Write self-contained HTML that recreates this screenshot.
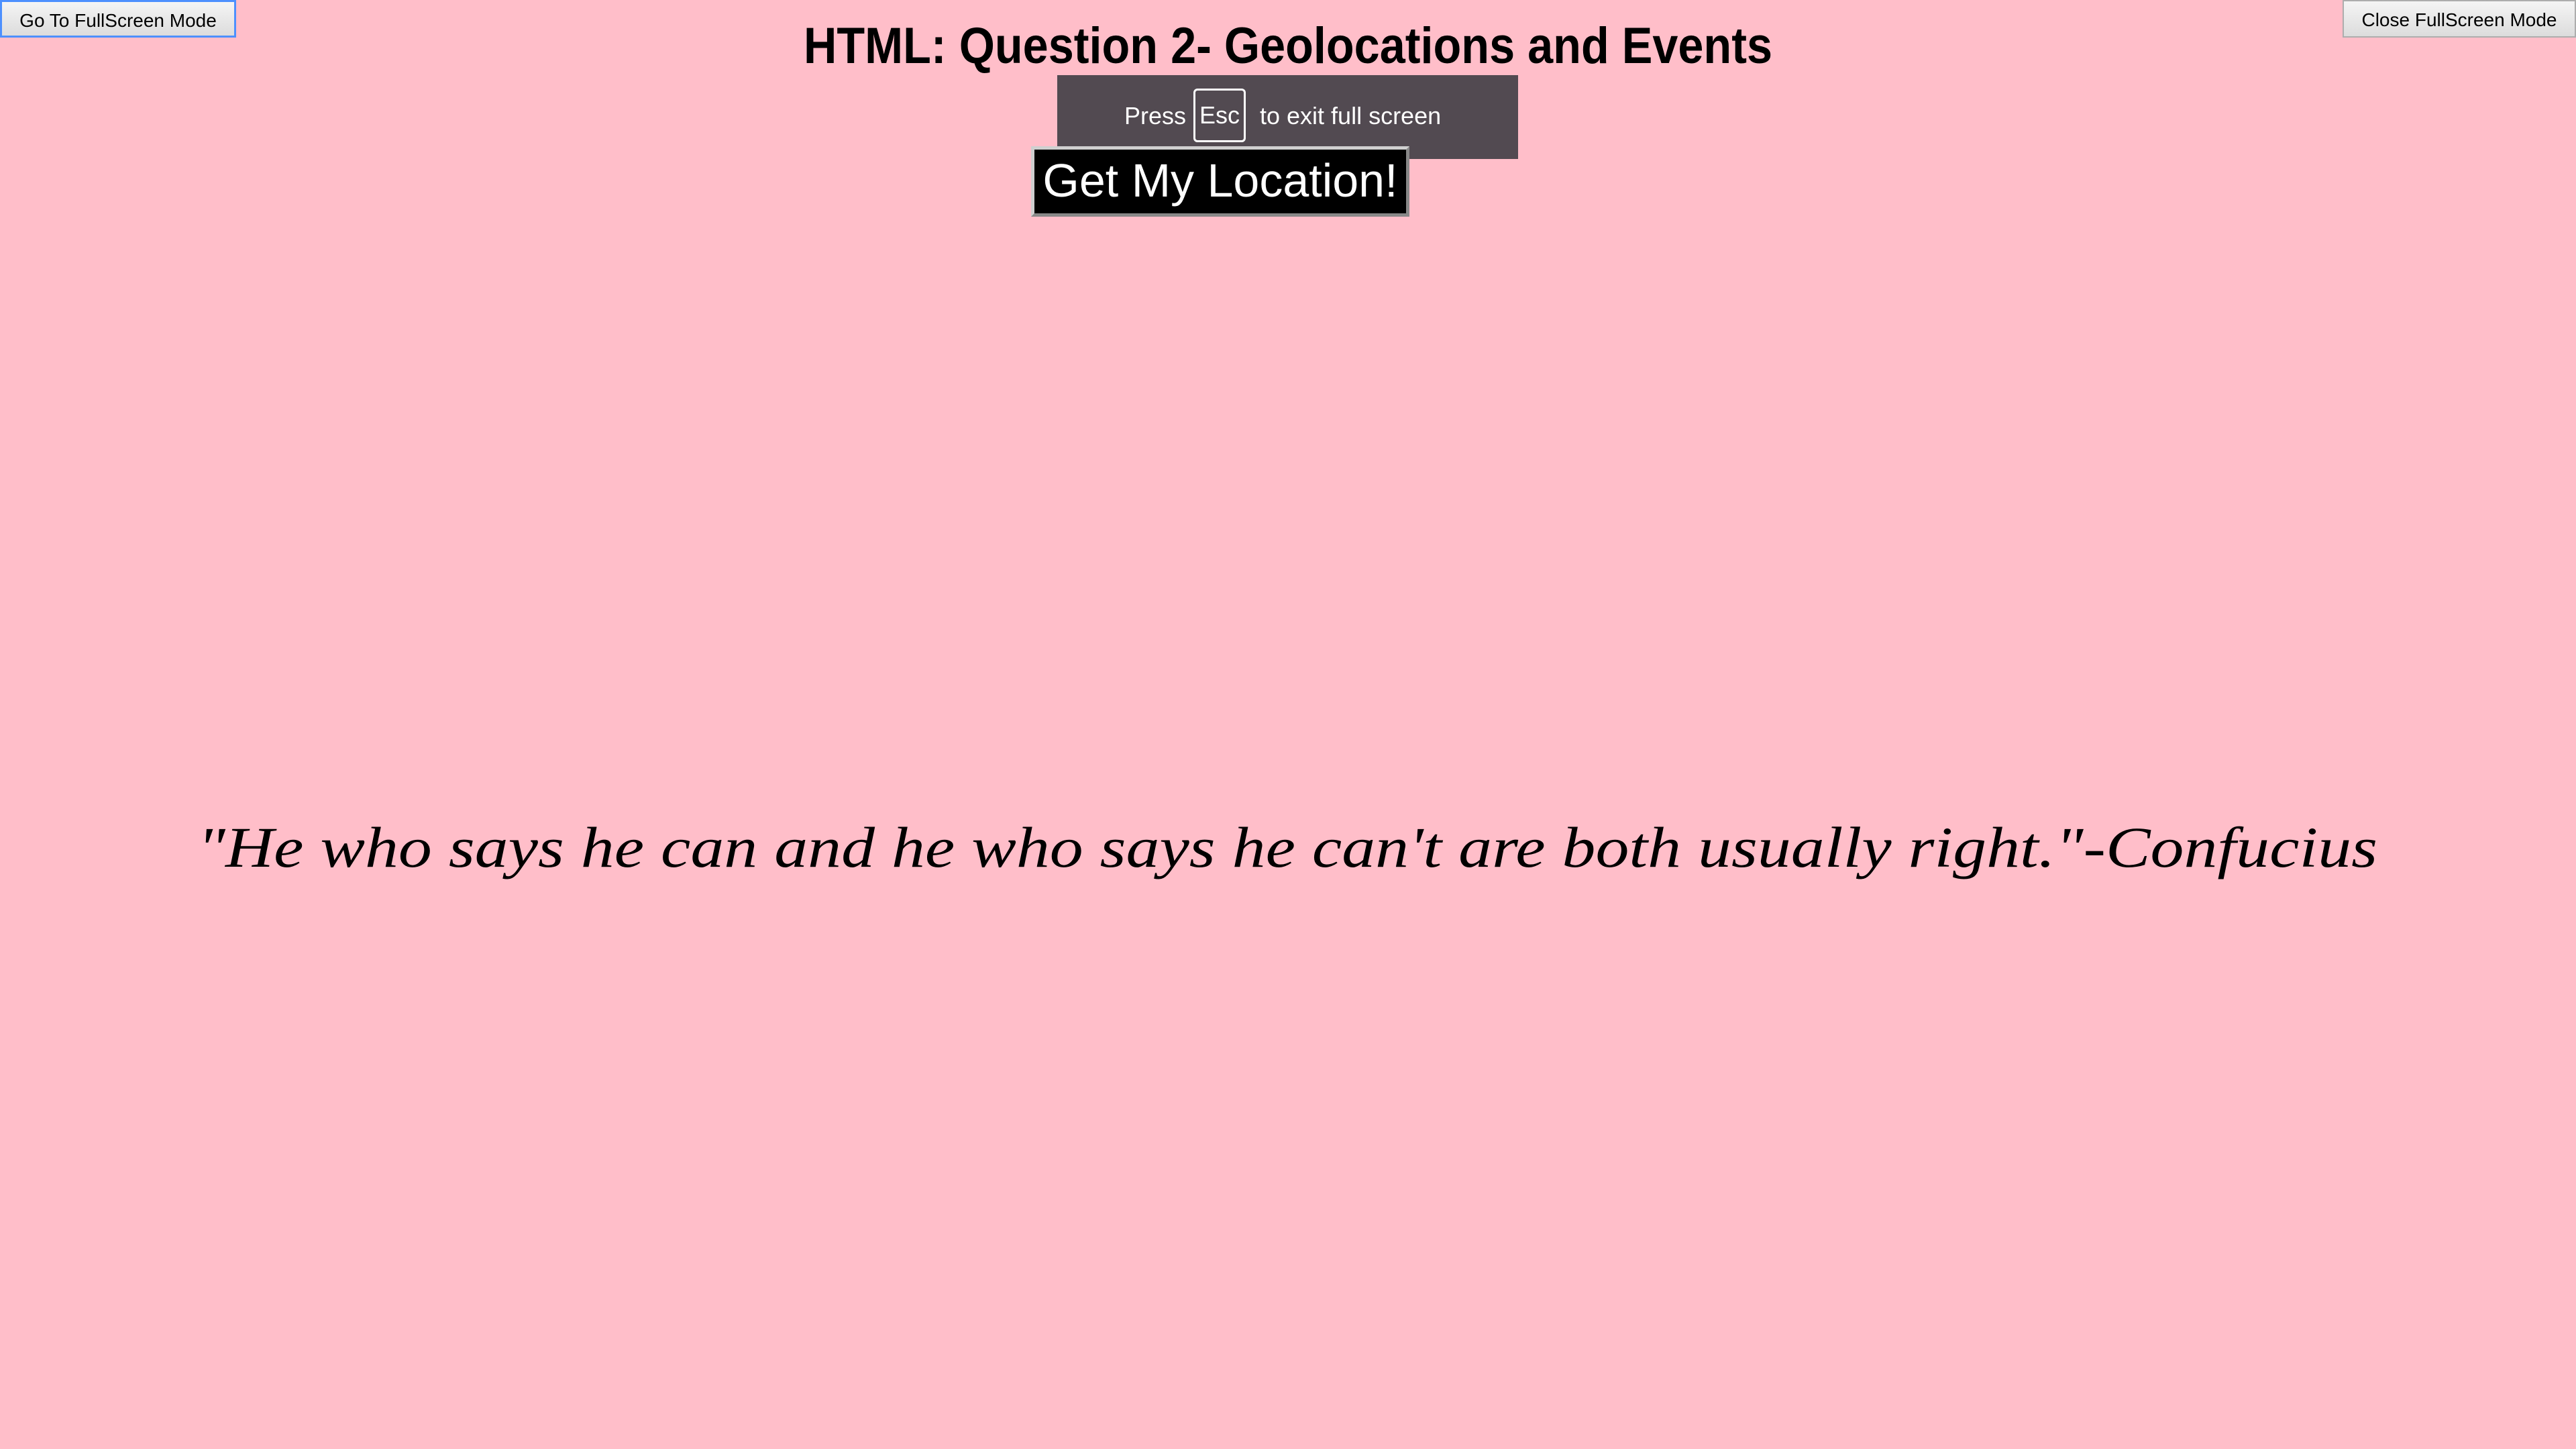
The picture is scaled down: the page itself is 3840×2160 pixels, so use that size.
<!DOCTYPE html>
<html><head><meta charset="utf-8"><style>
html,body{margin:0;padding:0;width:3840px;height:2160px;background:#ffbec9;overflow:hidden;position:relative;font-family:"Liberation Sans",sans-serif}
.btn{position:absolute;top:0;height:56px;font-size:28px;line-height:56px;text-align:center;background:linear-gradient(#f5f5f5,#dcdcdc);color:#000;box-sizing:border-box}
#go{left:0;width:352px;border:3px solid #4d90fe}
#close{right:0;width:348px;border:2px solid #adadad}
svg{position:absolute;left:0;top:0}
#ov{position:absolute;left:1576px;top:112px;width:687px;height:125px;background:#524a51;color:#fff;font-size:36px}
#loc{position:absolute;left:1537px;top:218px;width:564px;height:105px;background:#000;border:5px solid #cfcfcf;border-bottom-color:#888;border-right-color:#888;box-sizing:border-box;color:#fff;font-size:70px;line-height:92px;text-align:center}
</style></head><body>
<div class="btn" id="go">Go To FullScreen Mode</div>
<div class="btn" id="close">Close FullScreen Mode</div>
<svg width="3840" height="2160">
<text x="1198" y="94" textLength="1444" lengthAdjust="spacingAndGlyphs" font-family="Liberation Sans" font-weight="bold" font-size="76">HTML: Question 2- Geolocations and Events</text>
<text x="294" y="1292" textLength="3250" lengthAdjust="spacingAndGlyphs" font-family="Liberation Serif" font-style="italic" font-size="86">"He who says he can and he who says he can't are both usually right."-Confucius</text>
</svg>
<div id="ov">
<span style="position:absolute;left:100px;top:40px">Press</span>
<span style="position:absolute;left:203px;top:20px;width:78px;height:80px;border:3px solid #fff;border-radius:6px;box-sizing:border-box;text-align:center;line-height:74px">Esc</span>
<span style="position:absolute;left:302px;top:40px">to exit full screen</span>
</div>
<div id="loc">Get My Location!</div>
</body></html>
